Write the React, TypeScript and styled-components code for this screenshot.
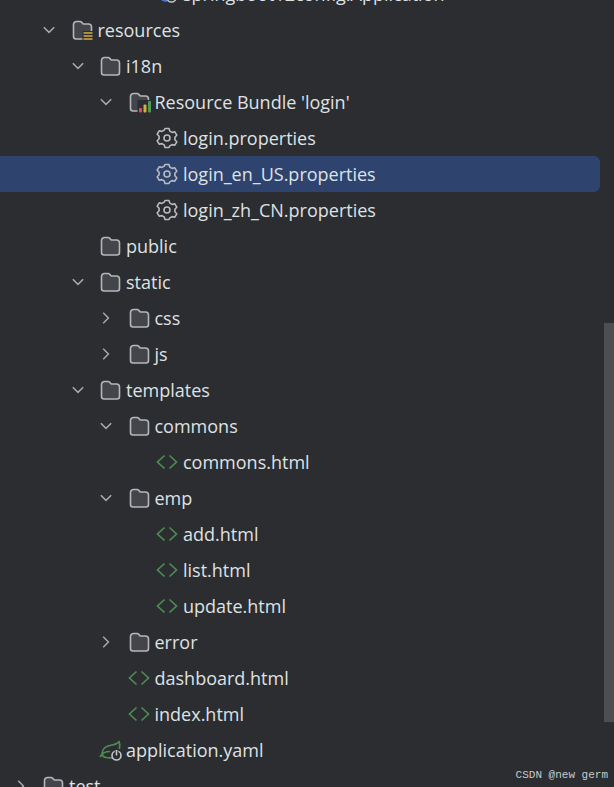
import React from "react";
import styled, { createGlobalStyle } from "styled-components";

type IconKind = "folder" | "resources" | "bundle" | "gear" | "html" | "spring" | "app";
type Arrow = "open" | "closed" | "none";

type Node = {
  label: string;
  level: number;
  icon: IconKind;
  arrow: Arrow;
  selected?: boolean;
};

const nodes: Node[] = [
  { label: "springboot12config.Application", level: 3, icon: "app", arrow: "none" },
  { label: "resources", level: 0, icon: "resources", arrow: "open" },
  { label: "i18n", level: 1, icon: "folder", arrow: "open" },
  { label: "Resource Bundle 'login'", level: 2, icon: "bundle", arrow: "open" },
  { label: "login.properties", level: 3, icon: "gear", arrow: "none" },
  { label: "login_en_US.properties", level: 3, icon: "gear", arrow: "none", selected: true },
  { label: "login_zh_CN.properties", level: 3, icon: "gear", arrow: "none" },
  { label: "public", level: 1, icon: "folder", arrow: "none" },
  { label: "static", level: 1, icon: "folder", arrow: "open" },
  { label: "css", level: 2, icon: "folder", arrow: "closed" },
  { label: "js", level: 2, icon: "folder", arrow: "closed" },
  { label: "templates", level: 1, icon: "folder", arrow: "open" },
  { label: "commons", level: 2, icon: "folder", arrow: "open" },
  { label: "commons.html", level: 3, icon: "html", arrow: "none" },
  { label: "emp", level: 2, icon: "folder", arrow: "open" },
  { label: "add.html", level: 3, icon: "html", arrow: "none" },
  { label: "list.html", level: 3, icon: "html", arrow: "none" },
  { label: "update.html", level: 3, icon: "html", arrow: "none" },
  { label: "error", level: 2, icon: "folder", arrow: "closed" },
  { label: "dashboard.html", level: 2, icon: "html", arrow: "none" },
  { label: "index.html", level: 2, icon: "html", arrow: "none" },
  { label: "application.yaml", level: 1, icon: "spring", arrow: "none" },
  { label: "test", level: -1, icon: "folder", arrow: "closed" },
];

const FOLDER =
  "M2.5 5.5a3 3 0 0 1 3-3h3.6a2 2 0 0 1 1.4.6l1.8 1.9h5.2a3 3 0 0 1 3 3v9.5a2.5 2.5 0 0 1-2.5 2.5H5a2.5 2.5 0 0 1-2.5-2.5z";

function FolderShape() {
  return <path d={FOLDER} fill="#43454a" stroke="#b5b7bb" strokeWidth="1.6" />;
}

function NodeIcon({ kind }: { kind: IconKind }) {
  if (kind === "gear") {
    return (
      <svg width="22" height="22" viewBox="0 0 22 22" fill="none">
        <path
          d="M9 2h4l.8 2.6 2.3 1.3 2.7-.6 2 3.4-1.9 2 0 2.600 1.900 2-2 3.400-2.700-.6-2.300 1.300L13 21H9l-.8-2.600-2.300-1.300-2.700.6-2-3.400 1.900-2v-2.600l-1.900-2 2-3.400 2.700.6 2.300-1.300z"
          stroke="#b9bbbf"
          strokeWidth="1.6"
          strokeLinejoin="round"
          transform="translate(0 -.5)"
        />
        <circle cx="11" cy="11" r="3" stroke="#b9bbbf" strokeWidth="1.6" />
      </svg>
    );
  }
  if (kind === "html") {
    return (
      <svg width="22" height="22" viewBox="0 0 22 22" fill="none">
        <path
          d="M8.500 4.500 1.500 11l7 6.500M13.500 4.500l7 6.500-7 6.500"
          stroke="#4f8a55"
          strokeWidth="1.700"
        />
      </svg>
    );
  }
  if (kind === "resources") {
    return (
      <svg width="22" height="22" viewBox="0 0 22 22" fill="none">
        <FolderShape />
        <rect x="11.500" y="12" width="10.500" height="10" fill="#2b2d30" />
        <path d="M12.500 14h9M12.500 17h9M12.500 20h9" stroke="#d6ae3f" strokeWidth="1.700" />
      </svg>
    );
  }
  if (kind === "bundle") {
    return (
      <svg width="23" height="22" viewBox="0 0 23 22" fill="none">
        <FolderShape />
        <rect x="9.500" y="9" width="13.500" height="13" fill="#2b2d30" />
        <rect x="11" y="17" width="3" height="4.500" rx="1" fill="#d9504f" />
        <rect x="15.500" y="13.500" width="3" height="8" rx="1" fill="#d6ae3f" />
        <rect x="20" y="10" width="3" height="11.500" rx="1" fill="#4f9a58" />
      </svg>
    );
  }
  if (kind === "spring") {
    return (
      <svg width="23" height="22" viewBox="0 0 23 22" fill="none">
        <path
          d="M20 2c-1 3-4 3.500-7 4-4 .6-9 2-9.800 7.500-.3 2.500 1.500 4.500 3.800 5 2 .4 5 .4 6 .2M1 18c1.500-3 5-5.500 10-5.500"
          stroke="#4f8a55"
          strokeWidth="1.700"
        />
        <path d="M20 2c1 3 .9 6 .3 8" stroke="#4f8a55" strokeWidth="1.700" />
        <circle cx="17.500" cy="16.500" r="4.500" fill="#2b2d30" stroke="#c4c6ca" strokeWidth="1.600" />
        <path d="M17.500 11.500v5" stroke="#2b2d30" strokeWidth="3.500" />
        <path d="M17.500 11v5.500" stroke="#c4c6ca" strokeWidth="1.600" />
      </svg>
    );
  }
  if (kind === "app") {
    return (
      <svg width="22" height="22" viewBox="0 0 22 22" fill="none">
        <path d="M2 9a9 9 0 0 0 9 9" stroke="#4a78d6" strokeWidth="2" />
        <circle cx="15.500" cy="14.500" r="4.500" stroke="#c4c6ca" strokeWidth="1.600" />
      </svg>
    );
  }
  return (
    <svg width="22" height="22" viewBox="0 0 22 22" fill="none">
      <FolderShape />
    </svg>
  );
}

function Chevron({ arrow }: { arrow: Arrow }) {
  if (arrow === "none") return null;
  return (
    <svg width="12" height="12" viewBox="0 0 12 12" fill="none">
      <path
        d={arrow === "open" ? "M.8 3.200 6 8.400l5.200-5.200" : "M3.200.8 8.400 6l-5.200 5.200"}
        stroke="#a8aaae"
        strokeWidth="1.500"
      />
    </svg>
  );
}

export default function App() {
  return (
    <Panel>
      <GlobalStyle />
      <Tree>
        {nodes.map((node) => (
          <Row key={node.label} $level={node.level} $selected={node.selected}>
            <ArrowSlot>
              <Chevron arrow={node.arrow} />
            </ArrowSlot>
            <IconSlot>
              <NodeIcon kind={node.icon} />
            </IconSlot>
            <Label>{node.label}</Label>
          </Row>
        ))}
      </Tree>
      <ScrollThumb />
      <Watermark>CSDN @new germ</Watermark>
    </Panel>
  );
}

const GlobalStyle = createGlobalStyle`
  html, body {
    margin: 0;
    padding: 0;
    background: #2b2d30;
  }
`;

const Panel = styled.div`
  position: relative;
  width: 614px;
  height: 787px;
  overflow: hidden;
  background: #2b2d30;
  font-family: "Open Sans", "Noto Sans", sans-serif;
`;

const Tree = styled.div`
  display: flex;
  flex-direction: column;
  margin-top: -24px;
`;

const Row = styled.div<{ $level: number; $selected?: boolean }>`
  display: flex;
  align-items: center;
  flex: none;
  height: 36px;
  margin-right: 14px;
  padding-left: ${(p) => 38 + p.$level * 28.5}px;
  border-radius: 0 6px 6px 0;
  background: ${(p) => (p.$selected ? "#2e436e" : "transparent")};
`;

const ArrowSlot = styled.div`
  display: flex;
  align-items: center;
  justify-content: center;
  flex: none;
  width: 22px;
  height: 100%;
`;

const IconSlot = styled.div`
  display: flex;
  align-items: center;
  flex: none;
  width: 27px;
  margin-left: 10.5px;
`;

const Label = styled.span`
  color: #dfe1e5;
  font-size: 18px;
  line-height: 36px;
  white-space: nowrap;
`;

const ScrollThumb = styled.div`
  position: absolute;
  top: 323px;
  right: 0;
  width: 10px;
  height: 399px;
  background: #4d4e51;
`;

const Watermark = styled.div`
  position: absolute;
  right: 6px;
  bottom: 5px;
  color: #c8c9ca;
  font-family: "Liberation Mono", monospace;
  font-size: 11px;
  line-height: 13px;
  white-space: nowrap;
`;
